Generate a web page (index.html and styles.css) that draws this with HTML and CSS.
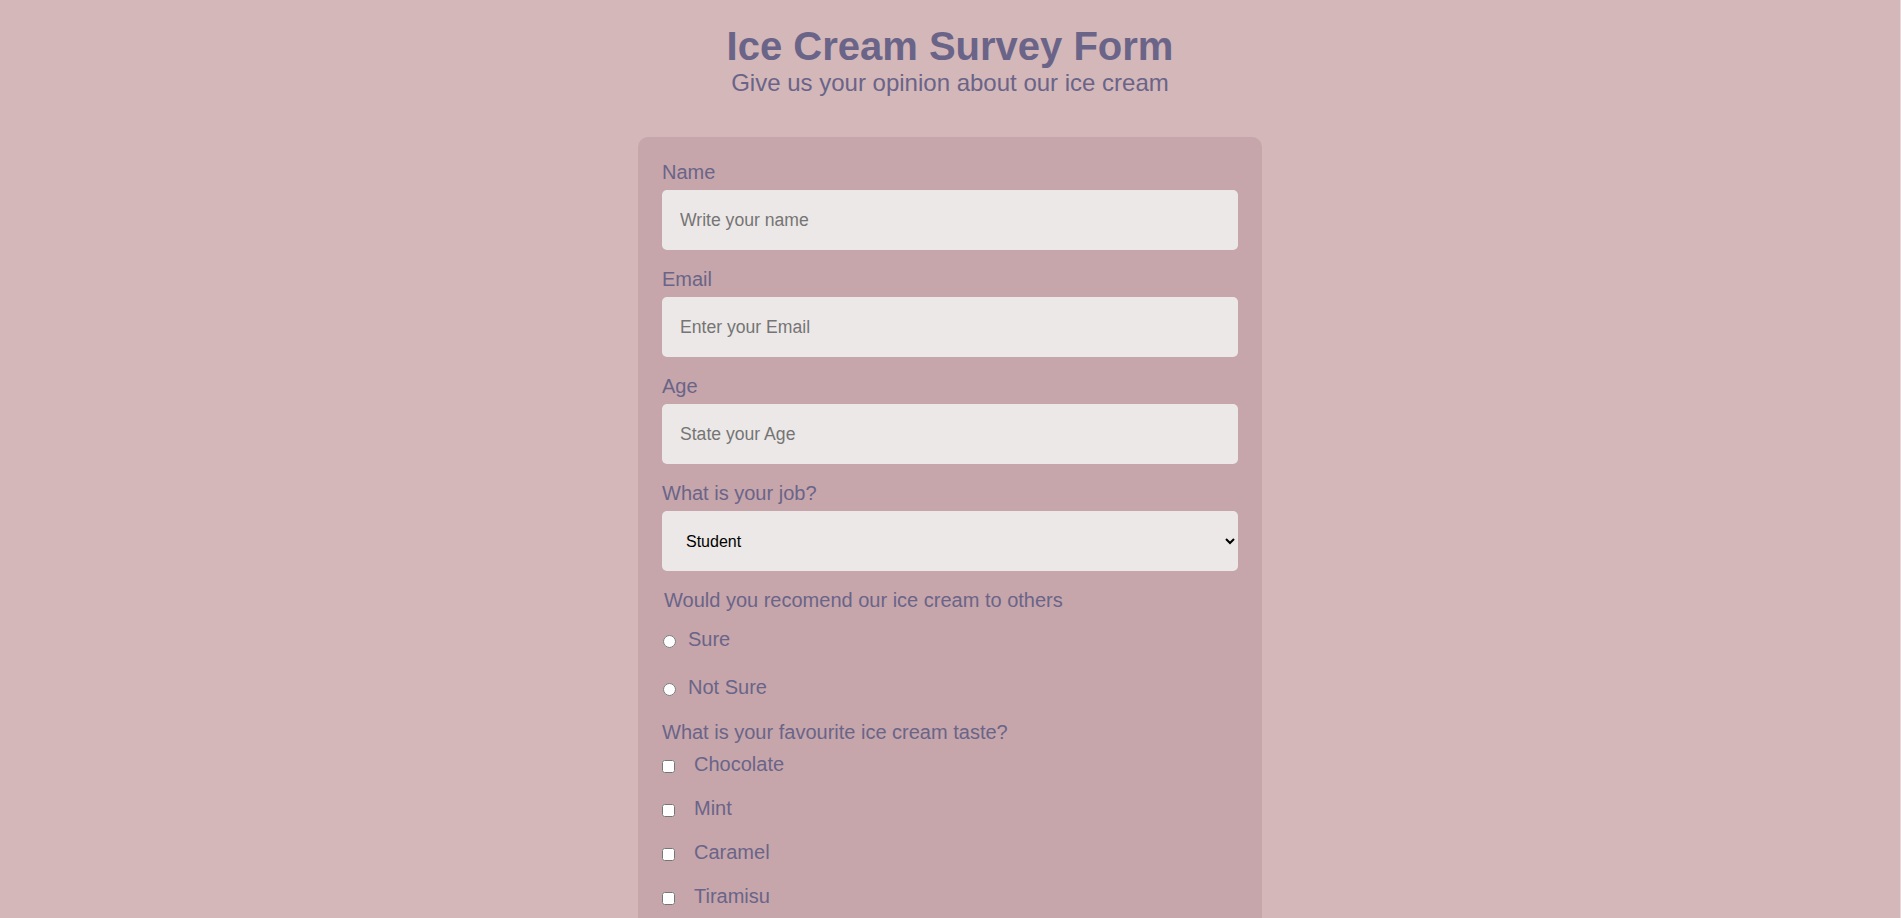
FILE: index.html
```html
<!DOCTYPE html>
<html lang="en">
<head>
<meta charset="utf-8">
<title>Ice Cream Survey Form</title>
<link rel="stylesheet" href="styles.css">
</head>
<body>
<header class="header">
  <h1 class="title">Ice Cream Survey Form</h1>
  <p class="subtitle">Give us your opinion about our ice cream</p>
</header>
<form class="card">
  <div class="field">
    <label class="label" for="name">Name</label>
    <input class="input" id="name" type="text" placeholder="Write your name">
  </div>
  <div class="field">
    <label class="label" for="email">Email</label>
    <input class="input" id="email" type="email" placeholder="Enter your Email">
  </div>
  <div class="field">
    <label class="label" for="age">Age</label>
    <input class="input" id="age" type="number" placeholder="State your Age">
  </div>
  <div class="field">
    <label class="label" for="job">What is your job?</label>
    <select class="input select" id="job">
      <option>Student</option>
      <option>Full time job</option>
      <option>Part time job</option>
      <option>Other</option>
    </select>
  </div>
  <fieldset class="group">
    <legend class="legend">Would you recomend our ice cream to others</legend>
    <label class="radio-row"><input class="radio" type="radio" name="rec"><span>Sure</span></label>
    <label class="radio-row radio-row-next"><input class="radio" type="radio" name="rec"><span>Not Sure</span></label>
  </fieldset>
  <div class="taste">
    <p class="label taste-title">What is your favourite ice cream taste?</p>
    <label class="check-row"><input class="check" type="checkbox"><span>Chocolate</span></label>
    <label class="check-row"><input class="check" type="checkbox"><span>Mint</span></label>
    <label class="check-row"><input class="check" type="checkbox"><span>Caramel</span></label>
    <label class="check-row"><input class="check" type="checkbox"><span>Tiramisu</span></label>
  </div>
</form>
</body>
</html>
```
FILE: styles.css
```css
html {
  margin: 0;
  padding: 0;
  background: #e6d8d8;
}
body {
  margin: 0 1px 0 0;
  padding: 0;
  min-height: 100vh;
  background: #d4b7b8;
  font-family: "Liberation Sans", Arial, sans-serif;
  color: #6a6489;
}
.header {
  padding-top: 24px;
  text-align: center;
}
.title {
  margin: 0;
  font-size: 40px;
  line-height: 45px;
  font-weight: bold;
}
.subtitle {
  margin: 0;
  font-size: 24px;
  line-height: 28px;
}
.card {
  width: 576px;
  margin: 40px auto 0;
  padding: 24px 24px 40px;
  background: #c6a6aa;
  border-radius: 10px;
}
.field {
  margin-bottom: 18px;
}
.label {
  display: block;
  font-size: 20px;
  line-height: 23px;
  margin: 0 0 6px;
}
.input {
  display: block;
  box-sizing: border-box;
  width: 100%;
  height: 60px;
  border: none;
  border-radius: 5px;
  background: #ece8e7;
  padding: 0 18px;
  font-family: "Liberation Sans", Arial, sans-serif;
  font-size: 17.6px;
  color: #222;
  outline: none;
}
.input::placeholder {
  color: #757575;
}
.select {
  font-size: 16px;
  color: #000;
  padding: 0 4px 0 20px;
}
.group {
  border: none;
  margin: 0;
  padding: 0;
}
.legend {
  padding: 0 2px;
  font-size: 20px;
  line-height: 23px;
}
.radio-row {
  display: flex;
  align-items: center;
  font-size: 20px;
  line-height: 23px;
  margin-top: 16px;
}
.radio-row-next {
  margin-top: 25px;
}
.radio {
  width: 13px;
  height: 13px;
  margin: 3px 12px 0 1px;
}
.taste {
  margin-top: 22px;
}
.taste-title {
  margin-bottom: 9px;
}
.check-row {
  display: flex;
  align-items: center;
  font-size: 20px;
  line-height: 23px;
  margin-bottom: 21px;
}
.check {
  width: 13px;
  height: 13px;
  margin: 3px 19px 0 0;
}
```
